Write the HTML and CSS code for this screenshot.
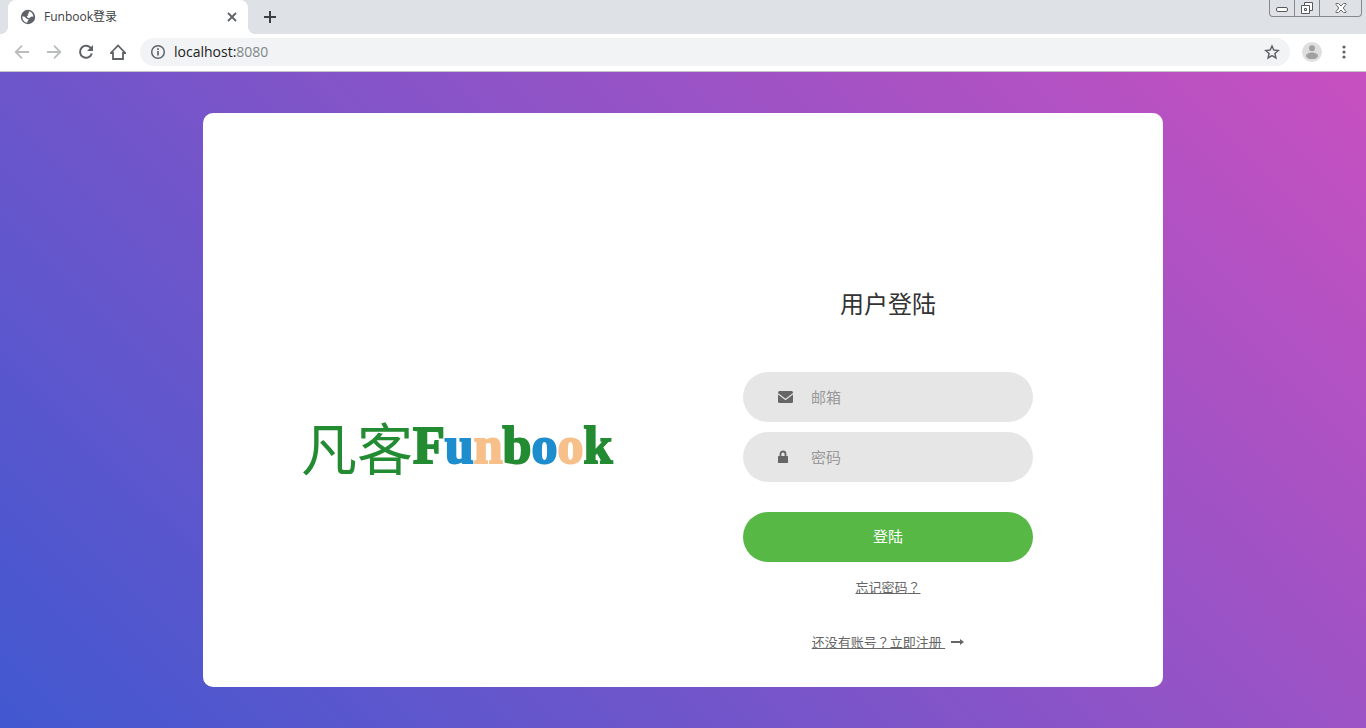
FILE: index.html
```html
<!DOCTYPE html>
<html lang="zh-CN">
<head>
<meta charset="utf-8">
<title>Funbook登录</title>
<link rel="stylesheet" href="styles.css">
</head>
<body>
<header class="browser">
  <div class="tab-strip">
    <div class="tab">
      <svg class="globe" width="16" height="16" viewBox="0 0 16 16" aria-hidden="true"><circle cx="8" cy="8" r="7.2" fill="#5f6368"/><path d="M8.8 2.2 11 3.1 12.6 5 13.5 7.6 10.8 7.8 9.4 9.2 7.4 8.6 6.8 7.2 8.4 6.2 7.6 5.2 8.8 4.2Z" fill="#fff"/><path d="M2.2 7.2 4.8 7.8 6.4 9.4 8.8 10.4 7.6 12 7.2 13.8 4.8 13 2.8 10.8Z" fill="#fff"/></svg>
      <span class="tab-title">Funbook登录</span>
      <button class="icon-button" type="button" aria-label="关闭标签页"><svg width="16" height="16" viewBox="0 0 16 16"><path d="m4 4 8 8M12 4l-8 8" stroke="#5f6368" stroke-width="1.8"/></svg></button>
    </div>
    <button class="icon-button new-tab" type="button" aria-label="新标签页"><svg width="16" height="16" viewBox="0 0 16 16"><path d="M8 2v12M2 8h12" stroke="#3c4043" stroke-width="2"/></svg></button>
    <div class="window-controls">
      <button type="button" aria-label="最小化"><svg width="14" height="14" viewBox="0 0 14 14"><rect x="1.5" y="6.5" width="11" height="4" rx="1.5" fill="#fff" stroke="#55585c"/></svg></button>
      <button type="button" aria-label="还原"><svg width="14" height="14" viewBox="0 0 14 14"><path d="M4.5 1.5h8v8h-8z" fill="#fff" stroke="#55585c"/><path d="M1.5 4.5h8v8h-8z" fill="#fff" stroke="#55585c"/><path d="M4.5 7.5h2v2h-2z" fill="none" stroke="#55585c"/></svg></button>
      <button class="window-close" type="button" aria-label="关闭"><svg width="14" height="14" viewBox="0 0 14 14"><path d="M2 2.5h2.5L7 5l2.500-2.500H12v1L9.200 7 12 10.500v1H9.500L7 9l-2.500 2.500H2v-1L4.800 7 2 3.500z" fill="#fff" stroke="#6a6d71"/></svg></button>
    </div>
  </div>
  <div class="toolbar">
    <div class="nav">
      <button class="icon-button" type="button" aria-label="后退"><svg width="16" height="16" viewBox="0 0 16 16"><path d="M15 8H2M8 1.700 1.700 8 8 14.300" fill="none" stroke="#babcbe" stroke-width="1.800"/></svg></button>
      <button class="icon-button" type="button" aria-label="前进"><svg width="16" height="16" viewBox="0 0 16 16"><path d="M1 8h13M8 1.700 14.300 8 8 14.300" fill="none" stroke="#babcbe" stroke-width="1.800"/></svg></button>
      <button class="icon-button" type="button" aria-label="重新加载"><svg width="16" height="16" viewBox="0 0 16 16"><path d="M13.200 4.700A6 6 0 1 0 13.800 9.500" fill="none" stroke="#5f6368" stroke-width="2"/><path d="M15 1v6H9z" fill="#5f6368"/></svg></button>
      <button class="icon-button" type="button" aria-label="主页"><svg width="16" height="16" viewBox="0 0 16 16"><path d="M.8 9 8 1.500 15.200 9H13v6H3V9z" fill="none" stroke="#5f6368" stroke-width="1.800"/></svg></button>
    </div>
    <div class="address">
      <svg width="16" height="16" viewBox="0 0 16 16" aria-hidden="true"><circle cx="8" cy="8" r="6.300" fill="none" stroke="#5f6368" stroke-width="1.500"/><path d="M8 7v4.500M8 4.300V6" stroke="#5f6368" stroke-width="1.700"/></svg>
      <span class="url">localhost:<span class="port">8080</span></span>
      <button class="icon-button" type="button" aria-label="收藏"><svg width="16" height="16" viewBox="0 0 16 16"><path d="m8 2 1.800 4.100 4.500.4-3.400 3 1 4.400L8 11.600l-3.900 2.300 1-4.400-3.400-3 4.500-.4z" fill="none" stroke="#5f6368" stroke-width="1.500"/></svg></button>
    </div>
    <button class="icon-button" type="button" aria-label="用户"><svg width="20" height="20" viewBox="0 0 20 20"><circle cx="10" cy="10" r="10" fill="#dedede"/><circle cx="10" cy="6.200" r="3" fill="#a0a0a0"/><ellipse cx="10" cy="13.800" rx="6" ry="3.300" fill="#a0a0a0"/></svg></button>
    <button class="icon-button menu" type="button" aria-label="菜单"><svg width="16" height="16" viewBox="0 0 16 16" fill="#5f6368"><circle cx="8" cy="3" r="1.600"/><circle cx="8" cy="8" r="1.600"/><circle cx="8" cy="13" r="1.600"/></svg></button>
  </div>
</header>
<main class="page">
  <section class="card">
    <div class="logo"><span class="logo-cn">凡客</span><span class="logo-en"><span class="green">F</span><span class="blue">u</span><span class="peach">n</span><span class="green">b</span><span class="blue">o</span><span class="peach">o</span><span class="green">k</span></span></div>
    <form class="login">
      <h1 class="title">用户登陆</h1>
      <div class="field">
        <label for="email" aria-label="邮箱"><svg width="15" height="14" viewBox="0 0 15 14"><rect y="1" width="15" height="12" rx="1.500" fill="#666"/><path d="M0 3.800 7.500 9.500 15 3.800" fill="none" stroke="#e6e6e6" stroke-width="1.200"/></svg></label>
        <input id="email" type="text" placeholder="邮箱">
      </div>
      <div class="field">
        <label for="password" aria-label="密码"><svg width="15" height="14" viewBox="0 0 15 14"><path d="M2.500 7V4a2.500 2.500 0 0 1 5 0v3" fill="none" stroke="#666" stroke-width="1.800"/><rect y="6" width="10" height="7" rx=".5" fill="#666"/></svg></label>
        <input id="password" type="password" placeholder="密码">
      </div>
      <button class="submit" type="submit">登陆</button>
      <div class="forgot"><a href="#">忘记密码<span class="mark" lang="zh-TW">？</span></a></div>
      <div class="register"><a href="#">还没有账号<span class="mark" lang="zh-TW">？</span>立即注册&nbsp;</a><svg width="13" height="8" viewBox="0 0 13 8" aria-hidden="true"><path d="M0 4h10" stroke="#666" stroke-width="2"/><path d="M9 1v6l4-3z" fill="#666"/></svg></div>
    </form>
  </section>
</main>
</body>
</html>
```
FILE: styles.css
```css
* { box-sizing: border-box; }

body {
  margin: 0;
  min-height: 100vh;
  display: flex;
  flex-direction: column;
  font-family: "Open Sans", "Noto Sans CJK SC", sans-serif;
}

button { font: inherit; cursor: pointer; }
svg { display: block; }

.tab-strip {
  display: flex;
  height: 34px;
  background: #dee1e6;
}

/* Curved foot to the left of the tab. */
.tab-strip::before {
  content: "";
  width: 8px;
  background: radial-gradient(circle at 0 0, #dee1e6 8px, #fff 8px) bottom / 8px 8px no-repeat;
}

.tab {
  display: flex;
  align-items: center;
  width: 240px;
  padding: 0 8px 0 12px;
  border-radius: 8px 8px 0 0;
  background: #fff;
}

.tab-title {
  flex: 1;
  margin-left: 8px;
  font-size: 12px;
  line-height: 16px;
  color: #3c4043;
}

.icon-button {
  display: flex;
  padding: 0;
  border: 0;
  background: none;
}

/* Curved foot to the right of the tab. */
.new-tab {
  align-items: center;
  padding-left: 14px;
  background: radial-gradient(circle at 100% 0, #dee1e6 8px, #fff 8px) left bottom / 8px 8px no-repeat;
}

.window-controls {
  display: flex;
  align-self: flex-start;
  height: 17px;
  margin: 0 4px 0 auto;
  border: 1px solid #85888c;
  border-top: 0;
  border-radius: 0 0 4px 4px;
}

.window-controls button {
  display: flex;
  align-items: center;
  justify-content: center;
  width: 25px;
  padding: 0;
  border: 0;
  border-right: 1px solid #85888c;
  background: none;
}

.window-controls .window-close {
  width: 41px;
  border-right: 0;
}

.toolbar {
  display: flex;
  align-items: center;
  height: 38px;
  padding: 0 14px 1px;
  border-bottom: 1px solid #c4c4c8;
  background: #fff;
}

.nav {
  display: flex;
  gap: 16px;
  margin-right: 14px;
}

.address {
  display: flex;
  flex: 1;
  align-items: center;
  height: 28px;
  margin-right: 12px;
  padding: 0 10px;
  border-radius: 14px;
  background: #f1f3f4;
}

.url {
  flex: 1;
  margin-left: 8px;
  font-size: 14px;
  line-height: 20px;
  color: #202124;
}

.port { color: #80868b; }

.menu { margin-left: 14px; }

.page {
  display: flex;
  flex: 1;
  align-items: center;
  justify-content: center;
  padding: 15px;
  background: linear-gradient(-135deg, #c850c0, #4158d0);
}

.card {
  display: flex;
  align-items: flex-start;
  justify-content: space-between;
  width: 100%;
  max-width: 960px;
  padding: 176px 130px 32px 98px;
  border-radius: 10px;
  background: #fff;
}

.logo {
  display: flex;
  align-items: center;
  margin-top: 121px;
  line-height: 72px;
  white-space: nowrap;
}

.logo-cn {
  font-family: "Noto Sans CJK SC", sans-serif;
  font-size: 56px;
  font-weight: 400;
  color: #238b32;
}

.logo-en {
  font-family: "Liberation Serif", serif;
  font-size: 52px;
  font-weight: 700;
  -webkit-text-stroke: 2px currentColor;
}

.green { color: #238b32; }
.blue { color: #1e8dcd; }
.peach { color: #f7c08a; }

.login { width: 290px; }

.title {
  margin: 0 0 54px;
  font-size: 24px;
  font-weight: 400;
  line-height: 29px;
  text-align: center;
  color: #333;
}

.field {
  display: flex;
  align-items: center;
  height: 50px;
  margin-bottom: 10px;
  padding: 0 30px 0 35px;
  border-radius: 25px;
  background: #e6e6e6;
}

.field input {
  flex: 1;
  min-width: 0;
  height: 50px;
  margin-left: 18px;
  padding: 0;
  border: 0;
  outline: 0;
  background: none;
  font: inherit;
  font-size: 15px;
  color: #666;
}

.field input::placeholder { color: #999; }

.submit {
  width: 100%;
  height: 50px;
  margin-top: 20px;
  padding: 0 0 3px;
  border: 0;
  border-radius: 25px;
  background: #57b846;
  font-size: 15px;
  color: #fff;
}

.forgot,
.register {
  display: flex;
  align-items: center;
  justify-content: center;
  gap: 6px;
  font-size: 13px;
  line-height: 20px;
}

.forgot { margin-top: 15px; }
.register { margin-top: 35px; margin-bottom: 3px; }

.login a { color: #666; }

.mark { font-family: "Noto Sans CJK TC", sans-serif; }
```
